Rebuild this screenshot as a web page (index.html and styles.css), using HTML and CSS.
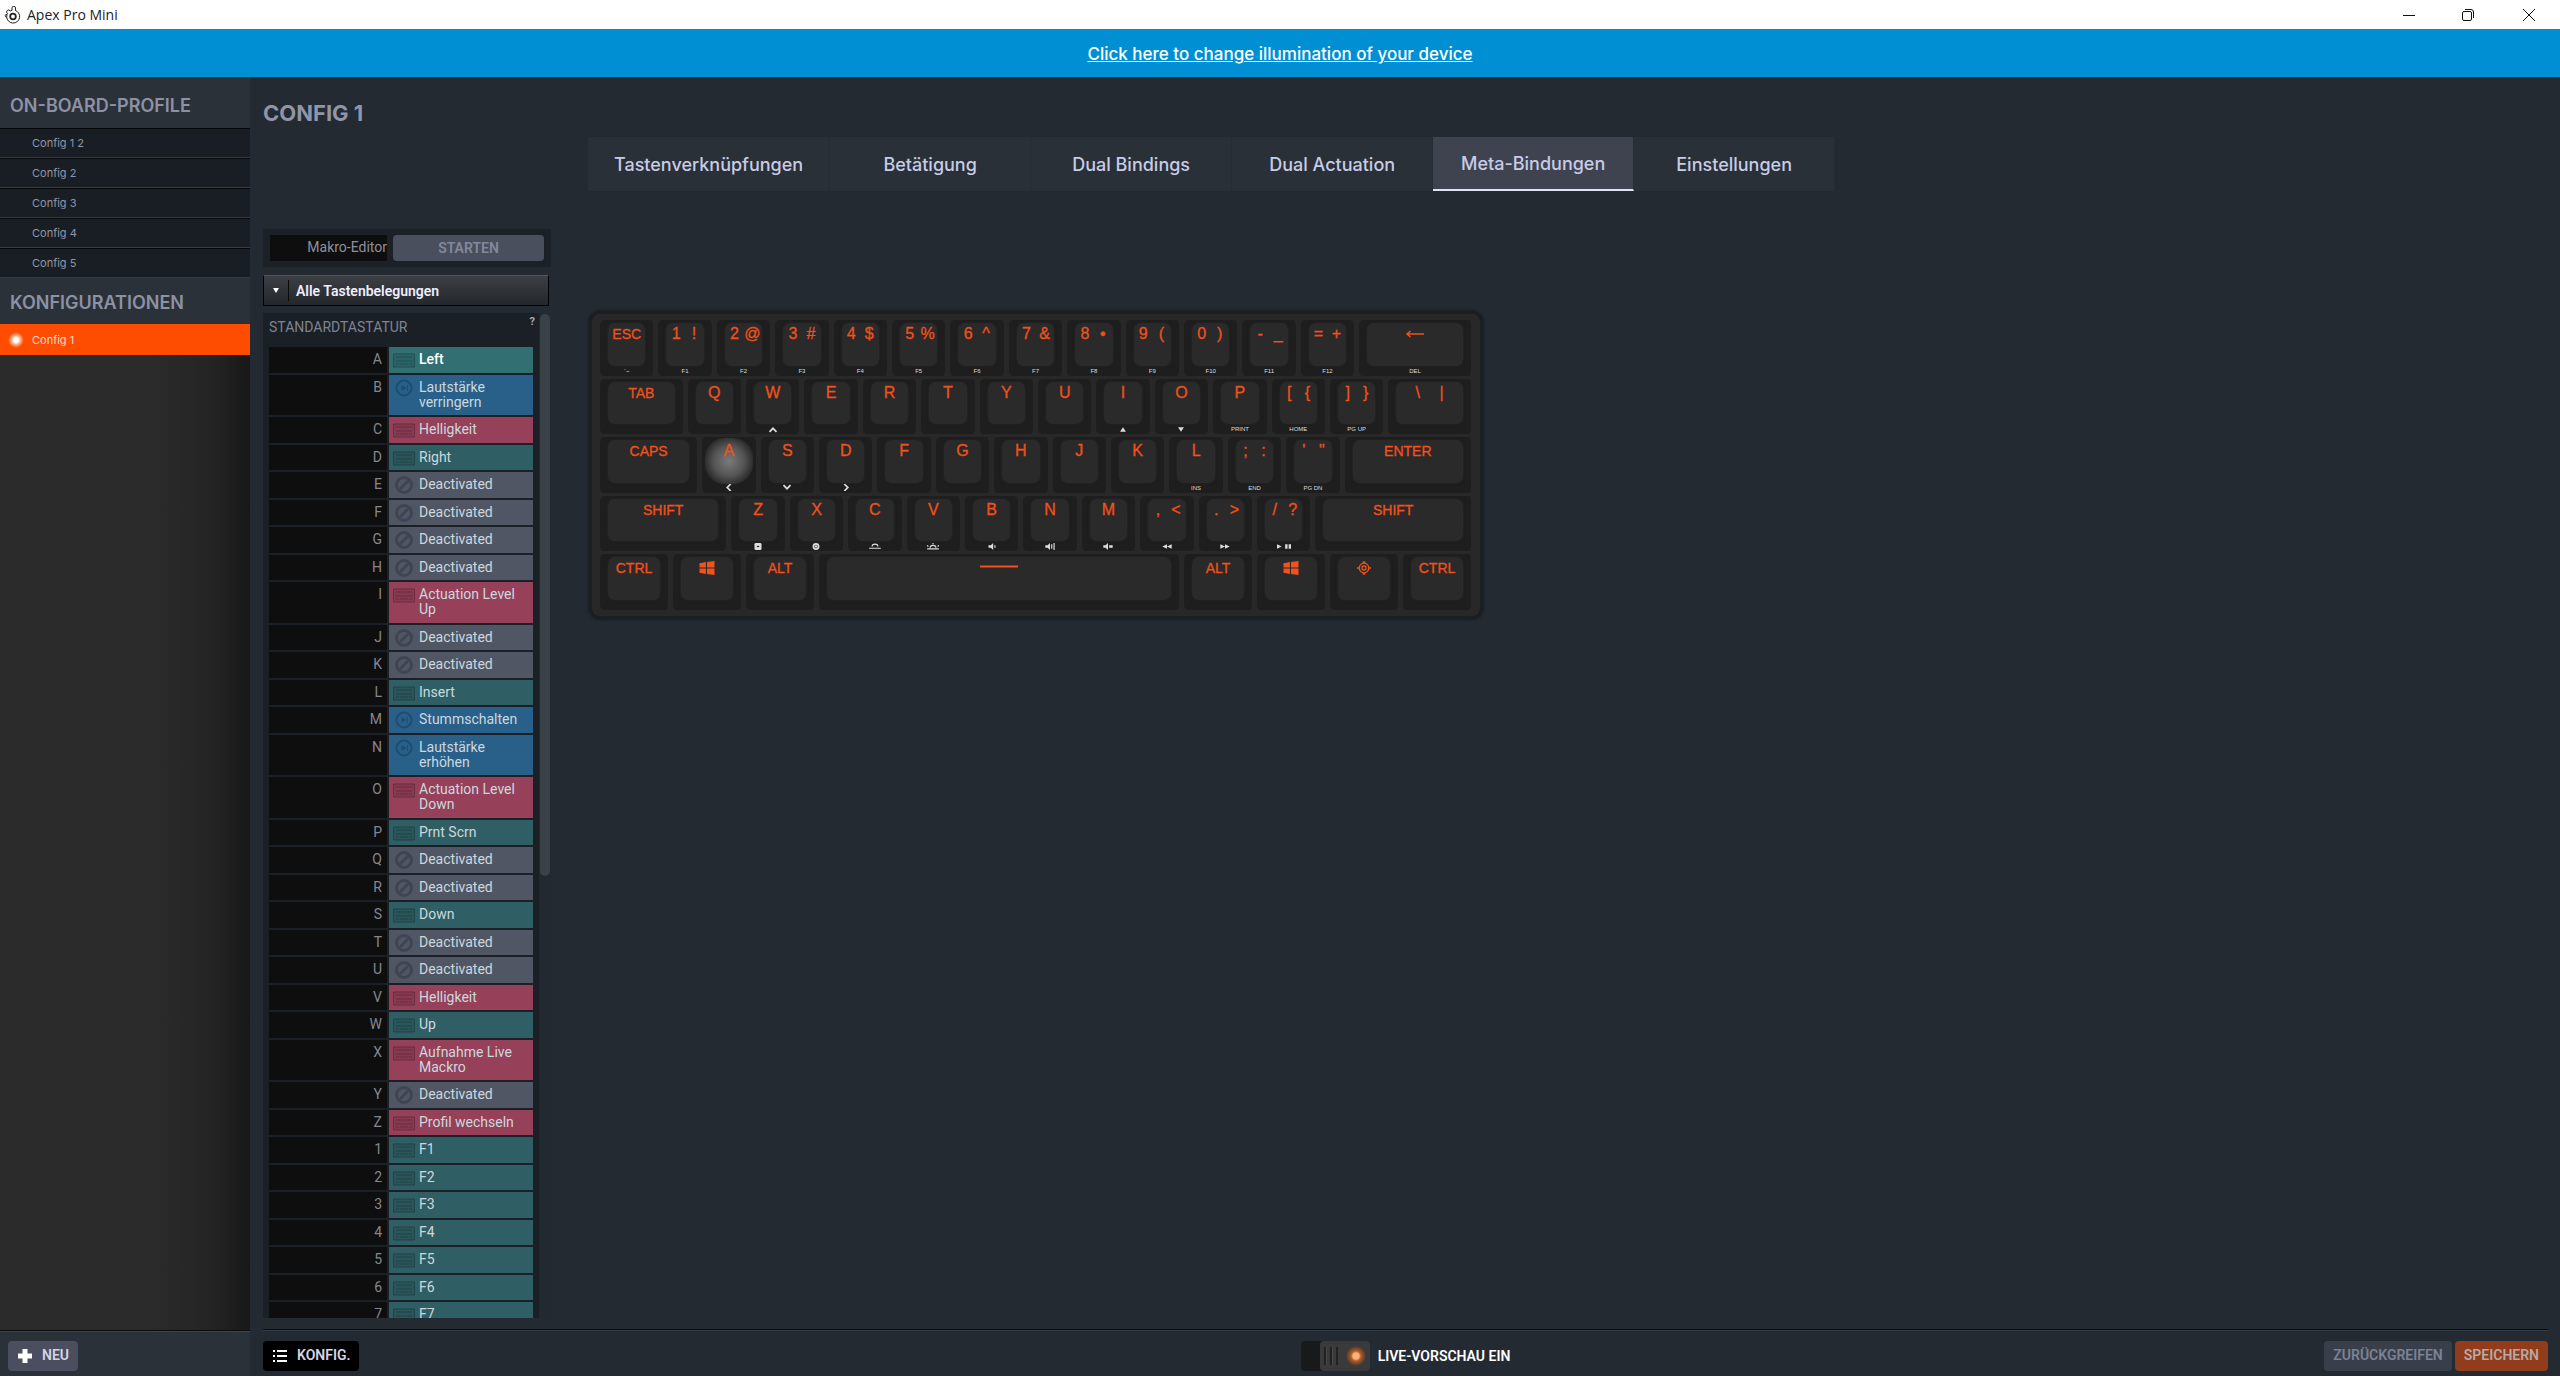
FILE: index.html
```html
<!DOCTYPE html>
<html lang="de">
<head>
<meta charset="utf-8">
<title>Apex Pro Mini</title>
<link rel="stylesheet" href="styles.css">
</head>
<body>
<svg class="defs" aria-hidden="true">
  <symbol id="kb" viewBox="0 0 22 15"><path d="M0 1h22v14H0z" fill="currentColor" opacity=".5"/><path d="M.5 1.500h21v13H.5zM3 4.500h16M3 8.500h16M3 11.500h3M7 11.500h8M16 11.500h3" fill="none" stroke="currentColor"/></symbol>
  <symbol id="off" viewBox="0 0 22 18"><circle cx="11" cy="9" r="7.500" fill="none" stroke="currentColor" stroke-width="3"/><path d="M7 13l8-8" stroke="currentColor" stroke-width="3"/></symbol>
  <symbol id="media" viewBox="0 0 22 18"><circle cx="11" cy="9" r="7.500" fill="none" stroke="currentColor" stroke-width="2"/><path d="M8.500 6l5 3-5 3zM14 6h1v6h-1z" fill="currentColor"/></symbol>
  <symbol id="win" viewBox="0 0 14 13"><path d="M0 2l6-1v5H0zM7 1l7-1v6H7zM0 7h6v5l-6-1zM7 7h7v6l-7-1z" fill="currentColor"/></symbol>
  <symbol id="steel" viewBox="0 0 18 18"><g fill="none" stroke="currentColor"><circle cx="10" cy="10.500" r="2.800" stroke-width="1.800"/><path d="M4 8.500A6.500 6.500 0 1 0 14 5.300L12.500 4.600V2A1.700 1.700 0 0 0 9 2V4.300L7.200 5A1.900 1.900 0 1 0 4.500 7.500L4 8.500A1.300 1.300 0 1 0 3.600 11"/></g></symbol>
  <symbol id="steel-key" viewBox="0 0 18 16"><g fill="none" stroke="currentColor"><circle cx="9" cy="8" r="2.300" stroke-width="1.500"/><circle cx="9" cy="8" r="5.500" stroke-width="1.500"/><path d="M1 8h2.500M14.500 8H17M7.500 2L9 .8 10.500 2M7.500 14L9 15.200l1.500-1.200" stroke-width="1.500"/></g></symbol>
</svg>

<header class="titlebar">
  <svg class="app-icon"><use href="#steel"/></svg>
  <span class="app-name">Apex Pro Mini</span>
  <button class="win-btn" aria-label="Minimieren"><svg viewBox="0 0 14 14"><path d="M1 7.500h12"/></svg></button>
  <button class="win-btn" aria-label="Wiederherstellen"><svg viewBox="0 0 14 14"><rect x="1.500" y="3.500" width="9" height="9" rx="1.500"/><path d="M4 1.500h6a2.500 2.500 0 0 1 2.500 2.500v6"/></svg></button>
  <button class="win-btn" aria-label="Schließen"><svg viewBox="0 0 14 14"><path d="M1 1l12 12M13 1L1 13"/></svg></button>
</header>
<div class="banner"><a href="#illumination">Click here to change illumination of your device</a></div>

<div class="app">
  <aside class="sidebar">
    <h2>ON-BOARD-PROFILE</h2>
    <ul class="profiles">
      <li><a href="#p1">Config 1 2</a></li>
      <li><a href="#p2">Config 2</a></li>
      <li><a href="#p3">Config 3</a></li>
      <li><a href="#p4">Config 4</a></li>
      <li><a href="#p5">Config 5</a></li>
    </ul>
    <h2>KONFIGURATIONEN</h2>
    <a class="active" href="#c1"><i class="led"></i>Config 1</a>
    <div class="side-fill"></div>
    <div class="side-foot">
      <button class="btn slate"><svg viewBox="0 0 16 16"><path d="M5.500 1h5v4.500H15v5h-4.500V15h-5v-4.500H1v-5h4.500z" fill="#fff"/></svg><span>NEU</span></button>
    </div>
  </aside>

  <main class="main">
    <div class="workspace">
      <h1>CONFIG 1</h1>
      <nav class="tabs">
        <button>Tastenverknüpfungen</button>
        <button>Betätigung</button>
        <button>Dual Bindings</button>
        <button>Dual Actuation</button>
        <button class="current">Meta-Bindungen</button>
        <button>Einstellungen</button>
      </nav>

      <section class="left">
        <div class="macro"><span>Makro-Editor</span><button>STARTEN</button></div>
        <button class="picker"><i class="arrow"></i>Alle Tastenbelegungen</button>
        <div class="bindings">
          <div class="viewport">
            <h3>STANDARDTASTATUR</h3><span class="help">?</span>
            <table>
              <tr><th>A</th><td><button class="bind teal on"><svg><use href="#kb"/></svg>Left</button></td></tr>
              <tr><th>B</th><td><button class="bind blue"><svg><use href="#media"/></svg>Lautstärke verringern</button></td></tr>
              <tr><th>C</th><td><button class="bind red"><svg><use href="#kb"/></svg>Helligkeit</button></td></tr>
              <tr><th>D</th><td><button class="bind teal"><svg><use href="#kb"/></svg>Right</button></td></tr>
              <tr><th>E</th><td><button class="bind grey"><svg><use href="#off"/></svg>Deactivated</button></td></tr>
              <tr><th>F</th><td><button class="bind grey"><svg><use href="#off"/></svg>Deactivated</button></td></tr>
              <tr><th>G</th><td><button class="bind grey"><svg><use href="#off"/></svg>Deactivated</button></td></tr>
              <tr><th>H</th><td><button class="bind grey"><svg><use href="#off"/></svg>Deactivated</button></td></tr>
              <tr><th>I</th><td><button class="bind red"><svg><use href="#kb"/></svg>Actuation Level Up</button></td></tr>
              <tr><th>J</th><td><button class="bind grey"><svg><use href="#off"/></svg>Deactivated</button></td></tr>
              <tr><th>K</th><td><button class="bind grey"><svg><use href="#off"/></svg>Deactivated</button></td></tr>
              <tr><th>L</th><td><button class="bind teal"><svg><use href="#kb"/></svg>Insert</button></td></tr>
              <tr><th>M</th><td><button class="bind blue"><svg><use href="#media"/></svg>Stummschalten</button></td></tr>
              <tr><th>N</th><td><button class="bind blue"><svg><use href="#media"/></svg>Lautstärke erhöhen</button></td></tr>
              <tr><th>O</th><td><button class="bind red"><svg><use href="#kb"/></svg>Actuation Level Down</button></td></tr>
              <tr><th>P</th><td><button class="bind teal"><svg><use href="#kb"/></svg>Prnt Scrn</button></td></tr>
              <tr><th>Q</th><td><button class="bind grey"><svg><use href="#off"/></svg>Deactivated</button></td></tr>
              <tr><th>R</th><td><button class="bind grey"><svg><use href="#off"/></svg>Deactivated</button></td></tr>
              <tr><th>S</th><td><button class="bind teal"><svg><use href="#kb"/></svg>Down</button></td></tr>
              <tr><th>T</th><td><button class="bind grey"><svg><use href="#off"/></svg>Deactivated</button></td></tr>
              <tr><th>U</th><td><button class="bind grey"><svg><use href="#off"/></svg>Deactivated</button></td></tr>
              <tr><th>V</th><td><button class="bind red"><svg><use href="#kb"/></svg>Helligkeit</button></td></tr>
              <tr><th>W</th><td><button class="bind teal"><svg><use href="#kb"/></svg>Up</button></td></tr>
              <tr><th>X</th><td><button class="bind red"><svg><use href="#kb"/></svg>Aufnahme Live Mackro</button></td></tr>
              <tr><th>Y</th><td><button class="bind grey"><svg><use href="#off"/></svg>Deactivated</button></td></tr>
              <tr><th>Z</th><td><button class="bind red"><svg><use href="#kb"/></svg>Profil wechseln</button></td></tr>
              <tr><th>1</th><td><button class="bind teal"><svg><use href="#kb"/></svg>F1</button></td></tr>
              <tr><th>2</th><td><button class="bind teal"><svg><use href="#kb"/></svg>F2</button></td></tr>
              <tr><th>3</th><td><button class="bind teal"><svg><use href="#kb"/></svg>F3</button></td></tr>
              <tr><th>4</th><td><button class="bind teal"><svg><use href="#kb"/></svg>F4</button></td></tr>
              <tr><th>5</th><td><button class="bind teal"><svg><use href="#kb"/></svg>F5</button></td></tr>
              <tr><th>6</th><td><button class="bind teal"><svg><use href="#kb"/></svg>F6</button></td></tr>
              <tr><th>7</th><td><button class="bind teal"><svg><use href="#kb"/></svg>F7</button></td></tr>
            </table>
          </div>
          <div class="scrollbar"><div class="thumb"></div></div>
        </div>
      </section>

      <section class="stage">
        <div class="keyboard">
          <div class="row">
            <button class="key"><b class="word">ESC</b><small>`~</small></button>
            <button class="key"><b><i>1</i><i>!</i></b><small>F1</small></button>
            <button class="key"><b><i>2</i><i>@</i></b><small>F2</small></button>
            <button class="key"><b><i>3</i><i>#</i></b><small>F3</small></button>
            <button class="key"><b><i>4</i><i>$</i></b><small>F4</small></button>
            <button class="key"><b><i>5</i><i>%</i></b><small>F5</small></button>
            <button class="key"><b><i>6</i><i>^</i></b><small>F6</small></button>
            <button class="key"><b><i>7</i><i>&amp;</i></b><small>F7</small></button>
            <button class="key"><b><i>8</i><i>•</i></b><small>F8</small></button>
            <button class="key"><b><i>9</i><i>(</i></b><small>F9</small></button>
            <button class="key"><b><i>0</i><i>)</i></b><small>F10</small></button>
            <button class="key"><b><i>-</i><i>_</i></b><small>F11</small></button>
            <button class="key"><b><i>=</i><i>+</i></b><small>F12</small></button>
            <button class="key u200"><b><svg class="g wide" viewBox="0 0 20 10"><path d="M19 5H2M5.500 2L2 5l3.500 3" fill="none" stroke="currentColor" stroke-width="1.500"/></svg></b><small>DEL</small></button>
          </div>
          <div class="row">
            <button class="key u150"><b class="word">TAB</b></button>
            <button class="key"><b>Q</b></button>
            <button class="key"><b>W</b><small><svg viewBox="0 0 8 6"><path d="M1 5l3-3 3 3" class="ln"/></svg></small></button>
            <button class="key"><b>E</b></button>
            <button class="key"><b>R</b></button>
            <button class="key"><b>T</b></button>
            <button class="key"><b>Y</b></button>
            <button class="key"><b>U</b></button>
            <button class="key"><b>I</b><small><svg viewBox="0 0 8 6"><path d="M1.500 5h5L4 1z"/></svg></small></button>
            <button class="key"><b>O</b><small><svg viewBox="0 0 8 6"><path d="M1.500 1h5L4 5z"/></svg></small></button>
            <button class="key"><b>P</b><small>PRINT</small></button>
            <button class="key"><b><i>[</i><i>{</i></b><small>HOME</small></button>
            <button class="key"><b><i>]</i><i>}</i></b><small>PG UP</small></button>
            <button class="key u150"><b class="far"><i>\</i><i>|</i></b></button>
          </div>
          <div class="row">
            <button class="key u175"><b class="word">CAPS</b></button>
            <button class="key lit"><b>A</b><small><svg viewBox="0 0 8 6"><path d="M5.500 0l-3 3 3 3" class="ln"/></svg></small></button>
            <button class="key"><b>S</b><small><svg viewBox="0 0 8 6"><path d="M1 1l3 3 3-3" class="ln"/></svg></small></button>
            <button class="key"><b>D</b><small><svg viewBox="0 0 8 6"><path d="M2.500 0l3 3-3 3" class="ln"/></svg></small></button>
            <button class="key"><b>F</b></button>
            <button class="key"><b>G</b></button>
            <button class="key"><b>H</b></button>
            <button class="key"><b>J</b></button>
            <button class="key"><b>K</b></button>
            <button class="key"><b>L</b><small>INS</small></button>
            <button class="key"><b><i>;</i><i>:</i></b><small>END</small></button>
            <button class="key"><b><i>'</i><i>"</i></b><small>PG DN</small></button>
            <button class="key u225"><b class="word">ENTER</b></button>
          </div>
          <div class="row">
            <button class="key u225"><b class="word">SHIFT</b></button>
            <button class="key"><b>Z</b><small><svg viewBox="0 0 8 6"><rect x="1" width="6" height="6" rx="1"/><path d="M3 3h2" stroke="#222"/></svg></small></button>
            <button class="key"><b>X</b><small><svg viewBox="0 0 8 6"><circle cx="4" cy="3" r="2.200" class="ln"/><circle cx="4" cy="3" r="1"/></svg></small></button>
            <button class="key"><b>C</b><small><svg viewBox="0 0 12 6"><path d="M1 4.500h10M3.500 3a2.500 2 0 0 1 5 0" class="th"/></svg></small></button>
            <button class="key"><b>V</b><small><svg viewBox="0 0 12 6"><path d="M1 5h10M3.500 4a2.500 2 0 0 1 5 0M1 2l1 1M11 2l-1 1M6 0v1" class="th"/></svg></small></button>
            <button class="key"><b>B</b><small><svg viewBox="0 0 8 6"><path d="M1 2h2l2-2v6L3 4H1zM6 2h1v2H6z"/></svg></small></button>
            <button class="key"><b>N</b><small><svg viewBox="0 0 8 6"><path d="M0 2h2l2-2v6L2 4H0zM5 1h1v4H5zM7 0h1v6H7z"/></svg></small></button>
            <button class="key"><b>M</b><small><svg viewBox="0 0 8 6"><path d="M0 2h2l2-2v6L2 4H0zM5 2h3v2H5z"/></svg></small></button>
            <button class="key"><b><i>,</i><i>&lt;</i></b><small><svg viewBox="0 0 8 6"><path d="M4 1v4L0 3zM8 1v4L4 3z"/></svg></small></button>
            <button class="key"><b><i>.</i><i>&gt;</i></b><small><svg viewBox="0 0 8 6"><path d="M0 1v4l4-2zM4 1v4l4-2z"/></svg></small></button>
            <button class="key"><b><i>/</i><i>?</i></b><small><svg viewBox="0 0 12 6"><path d="M0 1v4l4-2zM7 1h2v4H7zM10 1h2v4h-2z"/></svg></small></button>
            <button class="key u275"><b class="word">SHIFT</b></button>
          </div>
          <div class="row">
            <button class="key u125"><b class="word">CTRL</b></button>
            <button class="key u125"><b><svg class="g"><use href="#win"/></svg></b></button>
            <button class="key u125"><b class="word">ALT</b></button>
            <button class="key u625"><b><svg class="g bar" viewBox="0 0 38 12"><path d="M0 4.500h38" stroke="currentColor" stroke-width="2"/></svg></b></button>
            <button class="key u125"><b class="word">ALT</b></button>
            <button class="key u125"><b><svg class="g"><use href="#win"/></svg></b></button>
            <button class="key u125"><b><svg class="g"><use href="#steel-key"/></svg></b></button>
            <button class="key u125"><b class="word">CTRL</b></button>
          </div>
        </div>
      </section>
    </div>

    <footer class="footer">
      <button class="btn black"><svg viewBox="0 0 16 16"><path d="M5 3h10M5 8h10M5 13h10M1 3h2M1 8h2M1 13h2" stroke="#fff" stroke-width="2"/></svg><span>KONFIG.</span></button>
      <label class="live"><input type="checkbox" checked><span class="switch"><i class="grip"></i><i class="lamp"></i></span>LIVE-VORSCHAU EIN</label>
      <div class="actions"><button class="btn revert"><span>ZURÜCKGREIFEN</span></button><button class="btn save"><span>SPEICHERN</span></button></div>
    </footer>
  </main>
</div>
</body>
</html>
```
FILE: styles.css
```css
* { box-sizing: border-box; }
body {
  margin: 0;
  height: 100vh;
  display: flex;
  flex-direction: column;
  overflow: hidden;
  background: #232a31;
  font-family: Inter, "Liberation Sans", sans-serif;
  color: #9095a8;
}
button { font: inherit; color: inherit; border: 0; margin: 0; padding: 0; background: none; }
a { color: inherit; text-decoration: none; }
h1, h2, h3, ul { margin: 0; padding: 0; list-style: none; }
i { font-style: normal; }
.defs { display: none; }

.titlebar { display: flex; align-items: center; flex: none; height: 29px; background: #fff; color: #222; }
.app-icon { width: 18px; height: 18px; margin: 0 6px 0 3px; }
.app-name { flex: 1; font: 14px "Open Sans", "Noto Sans", sans-serif; }
.win-btn { width: 59px; height: 29px; display: grid; place-items: center; }
.win-btn:last-child { width: 63px; }
.win-btn svg { width: 14px; height: 14px; fill: none; stroke: #111; }

.banner {
  flex: none; height: 48px; display: grid; place-items: center; padding-top: 2px;
  background: #008fd2; color: #fff; font-size: 17px; font-weight: 500;
}
.banner a { text-decoration: underline; }

.app { flex: 1; min-height: 0; display: flex; }

.sidebar { width: 250px; flex: none; display: flex; flex-direction: column; }
.sidebar h2 {
  height: 46px; padding: 0 10px; font-size: 18px; font-weight: 600; line-height: 50px;
  background: #2b3138; color: #8d91a6;
}
.sidebar h2:first-child { height: 51px; line-height: 58px; }
.profiles a {
  display: block; height: 30px; padding-left: 32px; font-size: 11px; line-height: 28px;
  background: #191e24; border-top: 1px solid #060809; border-bottom: 1px solid #343b42;
}
.active {
  display: flex; align-items: center; height: 31px; gap: 8px; padding-left: 8px;
  background: #ff4d00; color: #ffd9c8; font-size: 11px;
}
.led { width: 16px; height: 16px; border-radius: 50%; background: radial-gradient(circle, #fff 20%, #ffb08a 40%, transparent 70%); }
.side-fill { flex: 1; background: linear-gradient(90deg, #2b2b2b 60%, #242424 85%, #181818); border-bottom: 1px solid #0c0c0c; }
.side-foot { height: 45px; padding: 9px 8px; background: #2b3138; border-top: 1px solid #3b4249; }

.btn {
  display: inline-flex; align-items: center; height: 30px; gap: 9px; padding: 0 9px;
  border-radius: 4px; font: 600 14px Roboto, sans-serif;
}
.btn svg { width: 16px; height: 16px; }
.btn span { padding-bottom: 3px; }
.slate { background: #4a4e5e; color: #d4d6e6; }
.black { background: #000; color: #d4d6e6; }
.revert { background: #383f4b; color: #7d8294; }
.save { background: #913c1a; color: #b9a9a6; }

.main { flex: 1; min-width: 0; display: flex; flex-direction: column; padding: 0 12px 0 13px; }
.workspace {
  flex: 1; min-height: 0; display: grid;
  grid-template: auto minmax(0, 1fr) / 288px minmax(0, 1fr);
  gap: 38px 37px; padding-bottom: 11px;
}
h1 { padding-top: 22px; font-size: 22px; line-height: 28px; font-weight: 700; }
.tabs { display: flex; padding-top: 60px; }
.tabs button {
  min-width: 201px; height: 54px; padding: 0 26px; font-size: 18px; font-weight: 500;
  background: #293037; color: #c8cce6; border-right: 1px solid #252c33;
}
.tabs .current { background: #3f4350; border-bottom: 2px solid #dfe2f5; }

.left { display: flex; flex-direction: column; min-height: 0; font-family: Roboto, sans-serif; }
.macro {
  display: grid; grid-template-columns: 1fr 151px; gap: 6px; height: 38px; padding: 6px 7px;
  background: #1c2127; font-size: 14px; line-height: 25px;
}
.macro span { background: #0e0e0f; text-align: right; color: #8d909b; }
.macro button { background: #4a4f5e; border-radius: 4px; font-weight: 600; color: #84889c; line-height: 24px; }
.picker {
  display: flex; align-items: center; margin-top: 8px; height: 31px; width: 286px;
  background: linear-gradient(#3c3f43, #23272b); border: 1px solid #000; border-top-color: #555;
  color: #eef; font-size: 14px; font-weight: 600;
}
.arrow { width: 25px; margin-right: 7px; height: 21px; border-right: 1px solid #0a0a0a; display: grid; place-items: center; }
.arrow::before { content: ""; border: 3px solid transparent; border-top: 5px solid #fff; border-bottom: 0; }
.bindings { flex: 1; min-height: 0; display: flex; margin-top: 7px; background: #1b2027; }
.viewport { flex: 1; min-width: 0; overflow: hidden; position: relative; }
.viewport h3 { padding: 4px 6px 0; height: 32px; font-size: 14px; line-height: 20px; font-weight: 400; color: #7f8490; }
.help { position: absolute; right: 4px; top: 2px; font-size: 11px; font-weight: 700; color: #aaa; }
.scrollbar { width: 12px; padding: 1px 1px 0; background: #222930; }
.thumb { height: 56%; border-radius: 5px; background: #3a4147; }

table { border-spacing: 2px; margin-left: 4px; font-size: 14px; line-height: 15px; }
th { width: 118px; padding: 5px 5px 0; background: #0e0e0f; text-align: right; vertical-align: top; font-weight: 400; color: #858790; }
td { width: 144px; padding: 0; }
.bind { display: flex; width: 144px; padding: 5px 10px 5px 4px; gap: 4px; text-align: left; font-weight: 400; color: #ccd8de; }
tr:nth-child(odd) .bind { padding-bottom: 6px; }
.bind svg { flex: none; width: 22px; height: 18px; margin: -1px 0 -2px; color: rgba(0, 0, 0, .2); }
.teal { background: #2f5f64; }
.on { background: #326f72; color: #fff; font-weight: 500; }
.blue { background: #28608a; }
.red { background: #96405a; }
.grey { background: #515665; }

.stage { padding-top: 81px; }
.keyboard {
  width: 888px; margin: 4px; padding: 6px; border-radius: 8px;
  display: grid; grid-auto-rows: 1fr; row-gap: 3px; height: 302px;
  background: #282828; box-shadow: 0 0 2px 4px #1b1f22;
}
.row { display: grid; grid-template-columns: repeat(60, minmax(0, 1fr)); min-height: 0; }
.key {
  grid-column: span 4; min-width: 0; position: relative; display: flex; flex-direction: column;
  align-items: center; justify-content: space-between; padding: 4px 0 1px;
  border: solid #282828; border-width: 0 3px 0 2px; background: #1e1e1e; border-radius: 6px;
}
.key::before {
  content: ""; position: absolute; inset: 3px 8px 10px; border-radius: 7px;
  background: #2a2a2a; box-shadow: 0 0 3px #262626;
}
.lit::before { inset: 1px 3px 9px; border-radius: 20px; background: radial-gradient(circle, #7a7a7a, #555 45%, #2a2a2a 75%); }
.key b {
  position: relative; display: flex; height: 20px; line-height: 20px; color: #f1511b;
  font-family: "Liberation Sans", Arial, sans-serif; font-size: 16px; font-weight: 400;
  -webkit-text-stroke: .3px #f1511b;
}
.key .word { font-size: 14px; }
.key b i { width: 18px; text-align: center; }
.key b.far i { width: 24px; }
.g { width: 16px; height: 14px; margin-top: 3px; }
.g.wide { width: 20px; }
.g.bar { width: 38px; }
.key small {
  position: relative; height: 8px; display: grid; place-items: center;
  font: 6px/8px "Liberation Sans", Arial, sans-serif; color: #ddd;
}
.key small svg { height: 7px; width: 14px; fill: #ddd; }
.key small .ln, .key small .th { fill: none; stroke: #ddd; stroke-width: 1.500; }
.key small .th { stroke-width: 1; }
.u125 { grid-column: span 5; }
.u150 { grid-column: span 6; }
.u175 { grid-column: span 7; }
.u200 { grid-column: span 8; }
.u225 { grid-column: span 9; }
.u275 { grid-column: span 11; }
.u625 { grid-column: span 25; }

.footer {
  flex: none; height: 47px; display: grid; grid-template-columns: 1fr auto 1fr; align-items: center;
  padding-top: 6px; border-top: 1px solid #0b0d10; box-shadow: inset 0 1px #353c44;
  grid-column-gap: 10px;
}
.footer > .btn { justify-self: start; }
.live { display: flex; align-items: center; gap: 8px; color: #fff; font: 600 14px Roboto, sans-serif; }
.live input { position: absolute; opacity: 0; }
.switch { width: 69px; height: 30px; padding-left: 19px; border-radius: 4px; background: #17191b; display: flex; }
.grip {
  width: 22px; border-radius: 4px 0 0 4px;
  background: repeating-linear-gradient(90deg, #222 0 2px, #4a4a4a 2px 3px, transparent 3px 6px) center / 14px 18px no-repeat #3a3a3b;
}
.lamp { flex: 1; border-radius: 0 4px 4px 0; background: radial-gradient(circle at 50% 50%, #ffb27a 3px, #b85a20 5px, transparent 10px) #3a3a3b; }
.actions { justify-self: end; display: flex; gap: 3px; }
```
